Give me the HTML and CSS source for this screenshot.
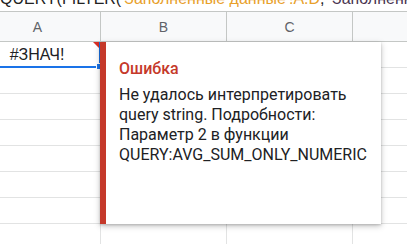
FILE: index.html
```html
<!DOCTYPE html>
<html lang="ru">
<head>
  <meta charset="UTF-8">
  <title>Ошибка QUERY</title>
  <link rel="stylesheet" href="styles.css">
</head>
<body>
  <div class="formula-bar">
    <div class="formula-text">QUERY(FILTER(<span class="ref">'Заполненные данные'!A:D</span>, <span class="ref2">'Заполненные</span></div>
  </div>

  <div class="sheet">
    <div class="col-head">A</div>
    <div class="col-head">B</div>
    <div class="col-head">C</div>
    <div class="col-head">D</div>

    <div class="cell selected">
      #ЗНАЧ!
      <span class="err-mark"></span>
      <span class="handle"></span>
    </div>
    <div class="cell"></div><div class="cell"></div><div class="cell"></div>
    <div class="cell"></div><div class="cell"></div><div class="cell"></div><div class="cell"></div>
    <div class="cell"></div><div class="cell"></div><div class="cell"></div><div class="cell"></div>
    <div class="cell"></div><div class="cell"></div><div class="cell"></div><div class="cell"></div>
    <div class="cell"></div><div class="cell"></div><div class="cell"></div><div class="cell"></div>
    <div class="cell"></div><div class="cell"></div><div class="cell"></div><div class="cell"></div>
    <div class="cell"></div><div class="cell"></div><div class="cell"></div><div class="cell"></div>
    <div class="cell"></div><div class="cell"></div><div class="cell"></div><div class="cell"></div>
  </div>

  <!-- error tooltip over the grid -->
  <div class="error-popup">
    <div class="error-title">Ошибка</div>
    <div class="error-body">Не удалось интерпретировать query string. Подробности: Параметр 2 в функции QUERY:AVG_SUM_ONLY_NUMERIC</div>
  </div>
</body>
</html>
```

FILE: styles.css
```css
body { margin: 0; background: #fff; font-family: "Liberation Sans", Arial, sans-serif; overflow: hidden; }

.formula-bar { height: 11px; overflow: hidden; }
.formula-text { margin-top: -9px; font-size: 16px; line-height: 16px; color: #222; white-space: nowrap; }
.formula-text .ref { color: #e8a02a; }
.formula-text .ref2 { color: #4a3550; }

.sheet { display: grid; grid-template-columns: repeat(4, 126px); grid-template-rows: 30px; grid-auto-rows: 26px; margin-left: -25px; border-top: 1px solid #c4c7c5; }
.col-head { height: 30px; box-sizing: border-box; background: #f8f9fa; border-right: 1px solid #c4c7c5; border-bottom: 1px solid #c4c7c5; color: #5f6368; font-size: 14px; display: flex; align-items: center; justify-content: center; }
.cell { box-sizing: border-box; border-right: 1px solid #e2e3e3; border-bottom: 1px solid #e2e3e3; }

.cell.selected { position: relative; border-right: 2px solid #1a73e8; border-bottom: 2px solid #1a73e8; font-size: 16px; color: #202124; display: flex; align-items: center; justify-content: center; padding-top: 2px; }
.err-mark { position: absolute; top: 0; right: 0; width: 0; height: 0; border-top: 6px solid #d93025; border-left: 6px solid transparent; }
.handle { position: absolute; right: -4px; bottom: -4px; width: 5px; height: 5px; background: #1a73e8; border: 1px solid #fff; }

.error-popup { position: absolute; left: 100px; top: 42px; width: 281px; height: 182px; box-sizing: border-box; background: #fff; border-left: 6px solid #c5392a; padding: 17px 10px 0 13px; box-shadow: 0 2px 6px rgba(0,0,0,0.25), 0 1px 2px rgba(0,0,0,0.15); font-family: Roboto, "Liberation Sans", sans-serif; }
.error-title { color: #c5392a; font-size: 16px; font-weight: 500; line-height: 20px; margin-bottom: 6px; }
.error-body { color: #202124; font-size: 16px; line-height: 20px; }
```
